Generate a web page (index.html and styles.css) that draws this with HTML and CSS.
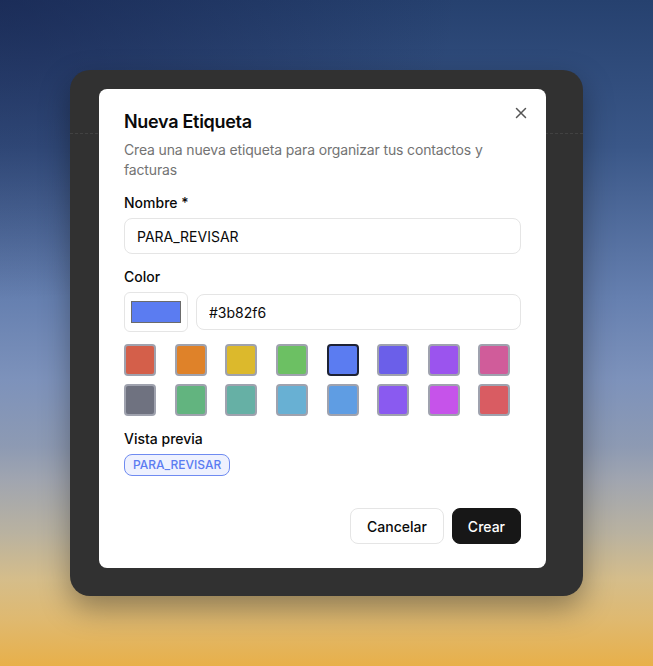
FILE: index.html
```html
<!DOCTYPE html>
<html lang="es">
<head>
    <meta charset="utf-8">
    <title>Nueva Etiqueta</title>
    <link rel="stylesheet" href="styles.css">
</head>
<body>
    <div class="frame">
        <div class="frame-header"></div>
        <div class="dialog">
            <button class="close" type="button" aria-label="Cerrar">
                <svg width="16" height="16" viewBox="0 0 16 16" fill="none" stroke="currentColor" stroke-width="1.5" stroke-linecap="round">
                    <path d="M3.5 3.5l9 9M12.5 3.5l-9 9"/>
                </svg>
            </button>

            <h2 class="title">Nueva Etiqueta</h2>
            <p class="subtitle">Crea una nueva etiqueta para organizar tus contactos y facturas</p>

            <label class="label" for="name">Nombre *</label>
            <input class="input" id="name" type="text" value="PARA_REVISAR">

            <label class="label" for="hex">Color</label>
            <div class="color-row">
                <div class="picker"><span class="picker-fill"></span></div>
                <input class="input" id="hex" type="text" value="#3b82f6">
            </div>

            <div class="swatches">
                <span class="swatch" style="background:#d45f4a"></span>
                <span class="swatch" style="background:#df8229"></span>
                <span class="swatch" style="background:#dcb92c"></span>
                <span class="swatch" style="background:#6cc063"></span>
                <span class="swatch selected" style="background:#5b7cf1"></span>
                <span class="swatch" style="background:#6b5fe9"></span>
                <span class="swatch" style="background:#9b54ee"></span>
                <span class="swatch" style="background:#d05c9a"></span>
                <span class="swatch" style="background:#6f7280"></span>
                <span class="swatch" style="background:#62b47f"></span>
                <span class="swatch" style="background:#66b0a5"></span>
                <span class="swatch" style="background:#68b0d3"></span>
                <span class="swatch" style="background:#5f9de3"></span>
                <span class="swatch" style="background:#8a5af0"></span>
                <span class="swatch" style="background:#c653ea"></span>
                <span class="swatch" style="background:#d95c62"></span>
            </div>

            <div class="label">Vista previa</div>
            <span class="badge">PARA_REVISAR</span>

            <div class="actions">
                <button class="btn btn-outline" type="button">Cancelar</button>
                <button class="btn btn-dark" type="button">Crear</button>
            </div>
        </div>
    </div>
</body>
</html>
```

FILE: styles.css
```css
* {
    box-sizing: border-box;
}
html, body {
    height: 100%;
}
body {
    margin: 0;
    font-family: Inter, "Noto Sans", Arial, sans-serif;
    color: #0a0a0a;
    background:
        radial-gradient(ellipse 70% 45% at 0% 0%, rgba(18, 28, 70, 0.55), rgba(18, 28, 70, 0) 100%),
        linear-gradient(180deg, #26416f 0%, #3a5788 22%, #6680b0 45%, #7d92bb 57%, #8d9ab3 67%, #a0a5b0 72%, #b9b2a0 80%, #d5bd8a 87%, #dfb970 93%, #e8b04a 100%);
    display: flex;
    align-items: center;
    justify-content: center;
}
.frame {
    position: relative;
    width: 513px;
    height: 526px;
    padding: 19px 37px 28px 29px;
    background: #313131;
    border-radius: 20px;
    box-shadow: 0 12px 30px rgba(0, 0, 0, 0.35);
}
.frame-header {
    position: absolute;
    left: 0;
    right: 0;
    top: 63px;
    border-top: 1px dashed #424242;
}
.dialog {
    position: relative;
    height: 479px;
    padding: 21px 25px 24px 25px;
    background: #fff;
    border-radius: 8px;
    display: flex;
    flex-direction: column;
}
.close {
    position: absolute;
    top: 16px;
    right: 17px;
    padding: 0;
    border: none;
    background: none;
    color: #555;
    display: flex;
}
.title {
    margin: 0;
    font-size: 18px;
    line-height: 24px;
    font-weight: 600;
    letter-spacing: -0.3px;
}
.subtitle {
    margin: 6px 0 0;
    font-size: 14px;
    line-height: 20px;
    color: #737373;
    letter-spacing: -0.15px;
}
.label {
    display: block;
    margin-top: 16px;
    font-size: 14px;
    line-height: 14px;
    font-weight: 500;
}
.input {
    width: 100%;
    height: 36px;
    margin-top: 8px;
    padding: 0 12px;
    border: 1px solid #e5e5e5;
    border-radius: 8px;
    font-family: inherit;
    font-size: 14px;
    color: #0a0a0a;
    background: #fff;
}
.color-row {
    display: flex;
    align-items: center;
    gap: 8px;
    margin-top: 8px;
}
.color-row .input {
    margin-top: 0;
    flex: 1;
}
.picker {
    width: 64px;
    height: 40px;
    flex: none;
    border: 1px solid #e5e5e5;
    border-radius: 6px;
    display: flex;
    align-items: center;
    justify-content: center;
}
.picker-fill {
    width: 50px;
    height: 22px;
    background: #5b7cf1;
    border: 1px solid #6b6b6b;
}
.swatches {
    display: grid;
    grid-template-columns: repeat(8, 1fr);
    gap: 8px;
    margin-top: 12px;
}
.swatch {
    width: 32px;
    height: 32px;
    border: 2px solid #9fa2ae;
    border-radius: 4px;
}
.swatch.selected {
    border-color: #1e2235;
}
.badge {
    align-self: flex-start;
    margin-top: 8px;
    height: 22px;
    padding: 0 8px;
    border: 1px solid #6f8bf1;
    border-radius: 8px;
    background: #eef1fe;
    color: #5b7cf1;
    font-size: 12px;
    line-height: 20px;
    font-weight: 500;
}
.actions {
    margin-top: auto;
    display: flex;
    justify-content: flex-end;
    gap: 8px;
}
.btn {
    height: 36px;
    padding: 0 16px;
    border-radius: 8px;
    font-family: inherit;
    font-size: 14px;
    font-weight: 500;
    cursor: pointer;
}
.btn-outline {
    background: #fff;
    border: 1px solid #e5e5e5;
    color: #0a0a0a;
}
.btn-dark {
    background: #171717;
    border: 1px solid #171717;
    color: #fff;
    padding: 0 15px;
}
```
